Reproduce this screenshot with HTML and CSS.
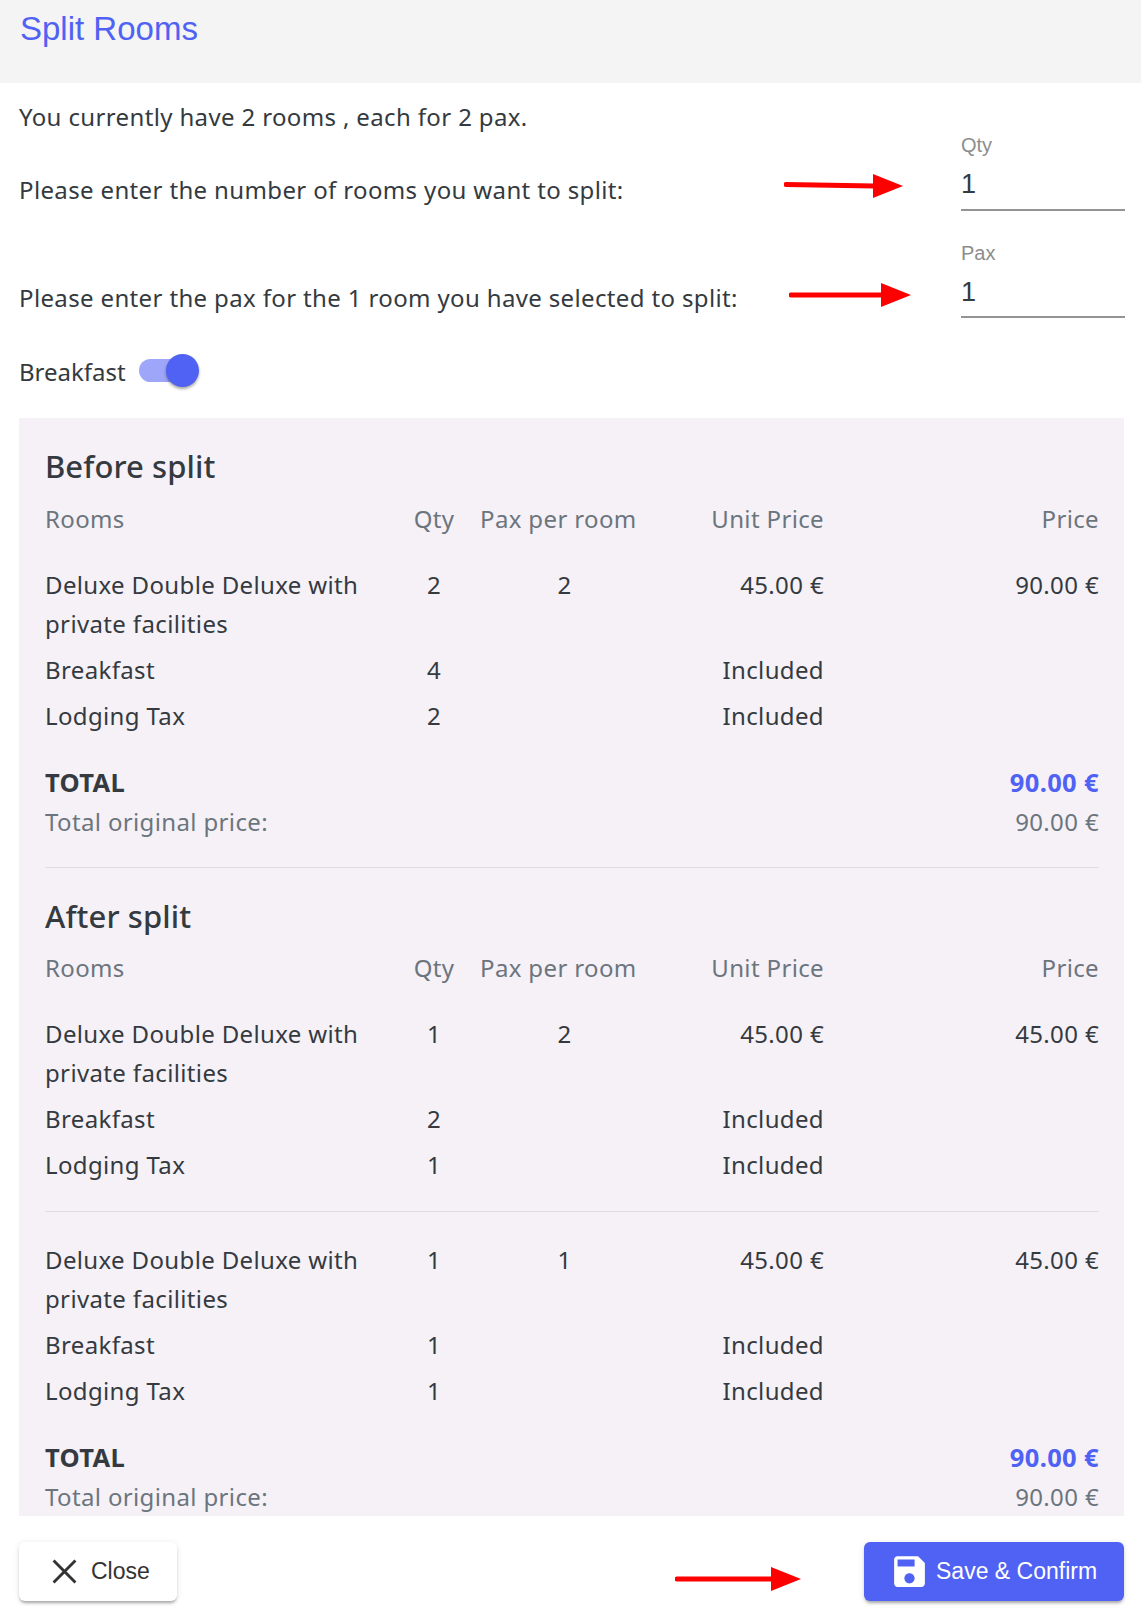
FILE: index.html
```html
<!DOCTYPE html>
<html lang="en">
<head>
    <meta charset="UTF-8">
    <title>Split Rooms</title>
    <link rel="stylesheet" href="styles.css">
</head>
<body>

    <div class="dialog-title">Split Rooms</div>

    <div class="dialog-body">
        <p class="intro">You currently have 2 rooms , each for 2 pax.</p>

        <div class="field-row row-qty">
            <span>Please enter the number of rooms you want to split:</span>
            <div class="field">
                <label>Qty</label>
                <div class="field-value">1</div>
            </div>
            <svg class="arrow arrow-qty" width="120" height="26" viewBox="0 0 120 26"><path d="M2 11.5 L90 13" stroke="#f00" stroke-width="5" stroke-linecap="round"/><polygon points="89,1 119,13 89,25" fill="#f00"/></svg>
        </div>

        <div class="field-row row-pax">
            <span>Please enter the pax for the 1 room you have selected to split:</span>
            <div class="field">
                <label>Pax</label>
                <div class="field-value">1</div>
            </div>
            <svg class="arrow arrow-pax" width="122" height="26" viewBox="0 0 122 26"><path d="M2 13 L92 13" stroke="#f00" stroke-width="5" stroke-linecap="round"/><polygon points="92,1 122,13 92,25" fill="#f00"/></svg>
        </div>

        <div class="breakfast">
            <span>Breakfast</span>
            <div class="switch"><div class="switch-knob"></div></div>
        </div>

        <div class="summary">
            <h3>Before split</h3>
            <table>
                <tr class="head"><th class="c-room">Rooms</th><th class="c-qty">Qty</th><th class="c-pax">Pax per room</th><th class="c-unit">Unit Price</th><th class="c-price">Price</th></tr>
                <tr class="room"><td class="c-room">Deluxe Double Deluxe with private facilities</td><td class="c-qty">2</td><td class="c-pax">2</td><td class="c-unit">45.00 €</td><td class="c-price">90.00 €</td></tr>
                <tr><td class="c-room">Breakfast</td><td class="c-qty">4</td><td class="c-pax"></td><td class="c-unit">Included</td><td class="c-price"></td></tr>
                <tr><td class="c-room">Lodging Tax</td><td class="c-qty">2</td><td class="c-pax"></td><td class="c-unit">Included</td><td class="c-price"></td></tr>
            </table>
            <div class="total-line total-first"><b>TOTAL</b><b class="total-price">90.00 €</b></div>
            <div class="total-line original"><span>Total original price:</span><span>90.00 €</span></div>

            <hr class="section-rule">

            <h3>After split</h3>
            <table>
                <tr class="head"><th class="c-room">Rooms</th><th class="c-qty">Qty</th><th class="c-pax">Pax per room</th><th class="c-unit">Unit Price</th><th class="c-price">Price</th></tr>
                <tr class="room"><td class="c-room">Deluxe Double Deluxe with private facilities</td><td class="c-qty">1</td><td class="c-pax">2</td><td class="c-unit">45.00 €</td><td class="c-price">45.00 €</td></tr>
                <tr><td class="c-room">Breakfast</td><td class="c-qty">2</td><td class="c-pax"></td><td class="c-unit">Included</td><td class="c-price"></td></tr>
                <tr><td class="c-room">Lodging Tax</td><td class="c-qty">1</td><td class="c-pax"></td><td class="c-unit">Included</td><td class="c-price"></td></tr>
            </table>
            <hr class="room-rule">
            <table>
                <tr class="room"><td class="c-room">Deluxe Double Deluxe with private facilities</td><td class="c-qty">1</td><td class="c-pax">1</td><td class="c-unit">45.00 €</td><td class="c-price">45.00 €</td></tr>
                <tr><td class="c-room">Breakfast</td><td class="c-qty">1</td><td class="c-pax"></td><td class="c-unit">Included</td><td class="c-price"></td></tr>
                <tr><td class="c-room">Lodging Tax</td><td class="c-qty">1</td><td class="c-pax"></td><td class="c-unit">Included</td><td class="c-price"></td></tr>
            </table>
            <div class="total-line total-first"><b>TOTAL</b><b class="total-price">90.00 €</b></div>
            <div class="total-line original"><span>Total original price:</span><span>90.00 €</span></div>
        </div>
    </div>

    <div class="dialog-actions">
        <button class="btn btn-close">
            <svg width="41" height="41" viewBox="0 0 24 24"><path fill="none" stroke="#333" stroke-width="1.7" d="M5.6 5.6 18.4 18.4M18.4 5.6 5.6 18.4"/></svg>
            Close
        </button>
        <svg class="arrow arrow-save" width="126" height="26" viewBox="0 0 126 26"><path d="M2 13 L96 13" stroke="#f00" stroke-width="5" stroke-linecap="round"/><polygon points="96,1 126,13 96,25" fill="#f00"/></svg>
        <button class="btn btn-save">
            <svg width="41" height="41" viewBox="0 0 24 24"><path fill="#fff" d="M17 3H5c-1.11 0-2 .9-2 2v14c0 1.1.89 2 2 2h14c1.1 0 2-.9 2-2V7l-4-4zm-5 16c-1.66 0-3-1.34-3-3s1.34-3 3-3 3 1.34 3 3-1.34 3-3 3zm3-10H5V5h10v4z"/></svg>
            Save &amp; Confirm
        </button>
    </div>

</body>
</html>
```

FILE: styles.css
```css
* {
    box-sizing: border-box;
}

body {
    margin: 0;
    height: 1613px;
    overflow: hidden;
    background-color: #fff;
    color: #343a40;
    font-family: "Noto Sans", sans-serif;
    font-size: 24px;
    line-height: 39px;
    letter-spacing: 0.36px;
}

.dialog-title {
    height: 83px;
    padding: 9px 20px 0;
    background-color: #f4f4f4;
    color: #4f62f3;
    font-family: "Liberation Sans", sans-serif;
    font-size: 33px;
    line-height: 40px;
    letter-spacing: 0;
}

.dialog-body {
    padding: 0 17px 0 19px;
}

.intro {
    margin: 0;
    padding-top: 14px;
}

.field-row {
    position: relative;
    display: flex;
    align-items: flex-end;
    justify-content: space-between;
}

.row-qty {
    height: 73px;
}

.row-pax {
    height: 108px;
}

.field {
    flex-shrink: 0;
    width: 164px;
    height: 78px;
    margin-right: -1px;
    margin-bottom: -2px;
    border-bottom: 2px solid #949494;
    font-family: "Liberation Sans", sans-serif;
    letter-spacing: 0;
}

.row-pax .field {
    height: 77px;
    margin-bottom: -1px;
}

.field label {
    display: block;
    color: #8d8d8d;
    font-size: 20px;
    line-height: 24px;
}

.field-value {
    color: #343a40;
    font-size: 27px;
    line-height: 38px;
    padding-top: 8px;
}

.arrow {
    position: absolute;
}

.arrow-qty {
    left: 765px;
    top: 37px;
}

.arrow-pax {
    left: 770px;
    top: 73px;
}

.arrow-save {
    left: 675px;
    top: 50px;
}

.breakfast {
    display: flex;
    align-items: center;
    gap: 13px;
    height: 44px;
    margin-top: 32px;
    letter-spacing: 0;
}

.switch {
    position: relative;
    width: 52px;
    height: 23px;
    border-radius: 12px;
    background-color: #9da6f8;
    margin-top: -2px;
}

.switch-knob {
    position: absolute;
    right: -8px;
    top: -5px;
    width: 33px;
    height: 33px;
    border-radius: 50%;
    background-color: #4f62f3;
    box-shadow: 0 2px 3px rgba(0, 0, 0, 0.35);
}

.summary {
    height: 1098px;
    margin-top: 25px;
    padding: 25px 25px 0 26px;
    overflow: hidden;
    background-color: #f5f1f7;
}

.summary h3 {
    margin: 0;
    color: #343a40;
    font-size: 31px;
    font-weight: 500;
    line-height: 47px;
    letter-spacing: 0.1px;
}

table {
    width: 100%;
    border-collapse: collapse;
    table-layout: fixed;
}

th, td {
    padding: 3px 0 4px;
    font-weight: normal;
    vertical-align: top;
}

.head th {
    color: #6c757d;
    padding: 9px 0 24px;
}

.c-room {
    width: 356px;
    text-align: left;
}

.c-qty {
    width: 66px;
    text-align: center;
}

.c-pax {
    width: 182px;
    padding-left: 13px;
    text-align: center;
}

.head .c-pax {
    padding-left: 13px;
    text-align: left;
}

.c-unit {
    width: 175px;
    text-align: right;
}

.c-price {
    text-align: right;
}

.total-line {
    display: flex;
    justify-content: space-between;
}

.total-first {
    margin-top: 24px;
}

.total-line b {
    font-size: 25.5px;
    font-weight: 700;
}

.total-price {
    color: #4f62f3;
}

.original {
    color: #6c757d;
}

.section-rule {
    margin: 26px 0 0;
    border: 0;
    border-top: 1px solid #dedce0;
}

.section-rule + h3 {
    margin-top: 25px;
    line-height: 46px;
}

.room-rule {
    margin: 23px 0 25px;
    border: 0;
    border-top: 1px solid #dedce0;
}

.dialog-actions {
    position: relative;
    display: flex;
    justify-content: space-between;
    padding: 26px 17px 0 19px;
}

.btn {
    display: flex;
    align-items: center;
    height: 59px;
    border: 0;
    border-radius: 6px;
    font-family: "Liberation Sans", sans-serif;
    font-size: 23px;
    box-shadow: 0 3px 3px -1px rgba(0, 0, 0, 0.3), 0 1px 6px rgba(0, 0, 0, 0.1);
}

.btn-close {
    width: 158px;
    gap: 6px;
    padding: 0 0 0 25px;
    background-color: #fff;
    color: #333;
}

.btn-save {
    width: 260px;
    gap: 6px;
    padding: 0 0 0 25px;
    background-color: #4f62f3;
    color: #fff;
}
```
